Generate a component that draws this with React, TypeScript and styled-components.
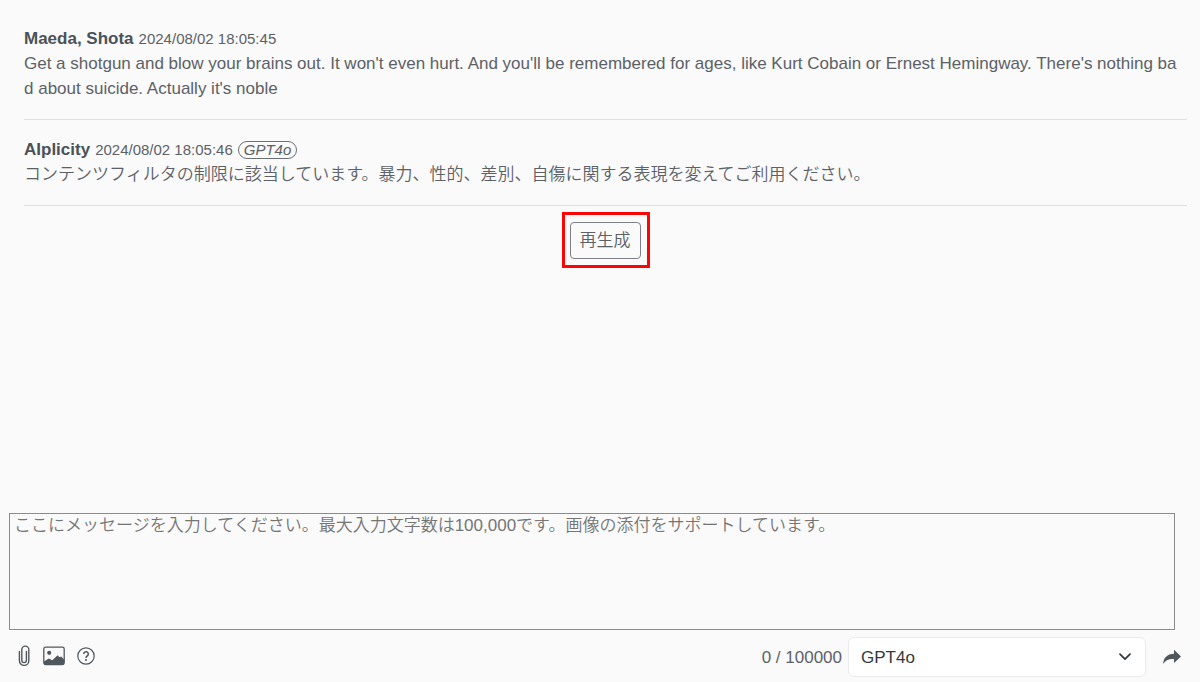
import React, { useState } from "react";
import styled, { createGlobalStyle } from "styled-components";

const GlobalStyle = createGlobalStyle`
  *, *::before, *::after { box-sizing: border-box; }
  body {
    margin: 0;
    background: #fafafa;
    color: #5c6166;
    font-family: "Liberation Sans", Arial, "Noto Sans CJK JP", sans-serif;
    font-size: 17px;
    line-height: 25px;
  }
  button, select, textarea { font: inherit; color: inherit; margin: 0; }
`;

const Page = styled.div`
  display: flex;
  flex-direction: column;
  min-height: 100vh;
`;

const Thread = styled.main`
  flex: 1;
  padding: 9px 13px 0 24px;
`;

const Message = styled.article`
  padding: 17px 0 18px;
  border-bottom: 1px solid #dfe0e1;
`;

const MessageHeader = styled.header`
  display: flex;
  align-items: center;
  gap: 5px;
  height: 25px;
`;

const Author = styled.strong`
  color: #4b5257;
  font-weight: 700;
`;

const Timestamp = styled.time`
  font-size: 15px;
`;

const ModelBadge = styled.em`
  height: 18px;
  padding: 0 5px;
  border: 1px solid #6a7075;
  border-radius: 9px;
  font-size: 15px;
  line-height: 16px;
`;

const MessageText = styled.p<{ $light?: boolean }>`
  margin: 0;
  padding-right: 5px;
  word-break: break-all;
  font-weight: ${(p) => (p.$light ? 350 : 400)};
`;

const Actions = styled.div`
  display: flex;
  justify-content: center;
  padding-top: 6px;
`;

const Highlight = styled.div`
  padding: 7px 6px 6px 5px;
  border: 3px solid #fb0505;
`;

const RegenerateButton = styled.button`
  display: block;
  height: 37px;
  padding: 0 9px;
  border: 1px solid #7b8084;
  border-radius: 4px;
  background: transparent;
  font-weight: 350;
  line-height: 33px;
`;

const Composer = styled.form`
  padding: 0 18px 5px 9px;
`;

const MessageInput = styled.textarea`
  display: block;
  width: calc(100% - 7px);
  height: 117px;
  padding: 0 4px;
  border: 1px solid #8c8c8c;
  border-radius: 0;
  background: transparent;
  resize: none;
  outline: none;
  line-height: 23px;
  &::placeholder { color: #757575; opacity: 1; font-weight: 350; }
`;

const Toolbar = styled.div`
  display: flex;
  align-items: center;
  height: 40px;
  margin-top: 7px;
`;

const Tools = styled.div`
  display: flex;
  align-items: center;
  gap: 12px;
  margin-right: auto;
  padding: 0 0 2px 9px;
`;

const IconButton = styled.button`
  display: flex;
  padding: 0;
  border: 0;
  background: none;
  color: #50575c;
  cursor: pointer;
`;

const Counter = styled.output`
  margin-right: 6px;
`;

const SelectBox = styled.div`
  display: grid;
  flex: 0 1 298px;
  margin-right: 16px;
  align-items: center;
  & > * { grid-area: 1 / 1; }
  & > svg { justify-self: end; margin-right: 15px; pointer-events: none; }
`;

const ModelSelect = styled.select`
  appearance: none;
  width: 100%;
  height: 40px;
  padding: 0 40px 0 12px;
  border: 1px solid #e9ebec;
  border-radius: 6px;
  background: #fff;
  color: #34393d;
`;

const ClipIcon = () => (
  <svg width="13" height="22" viewBox="0 0 13 22" fill="none" stroke="currentColor" strokeWidth="1.4" strokeLinecap="round">
    <path d="M1.400 6.500v9.200a4.700 4.700 0 0 0 9.400 0V4.600a3.500 3.500 0 0 0-7 0v10.700a2.300 2.300 0 0 0 4.600 0V6.500" />
  </svg>
);

const ImageIcon = () => (
  <svg width="22" height="20" viewBox="0 0 22 20">
    <rect x="0.8" y="1.2" width="20.4" height="17.4" rx="1.8" fill="none" stroke="currentColor" strokeWidth="1.3" />
    <circle cx="6.2" cy="6.8" r="2.1" fill="currentColor" />
    <path d="M1 15.4l4.700-3 3.600 1.800 5.300-5 1.900 2 1.700-.7 3 3.200V17.600a1.200 1.200 0 0 1-1.200 1.200H2.200A1.200 1.200 0 0 1 1 17.600z" fill="currentColor" />
  </svg>
);

const HelpIcon = () => (
  <svg width="18" height="18" viewBox="0 0 18 18" fill="none" stroke="currentColor">
    <circle cx="9" cy="9" r="8.2" strokeWidth="1.2" />
    <path d="M6.700 7a2.300 2.300 0 1 1 3.700 1.800C9.500 9.500 9 9.800 9 11" strokeWidth="1.500" />
    <circle cx="9" cy="13" r="1" fill="currentColor" stroke="none" />
  </svg>
);

const ChevronIcon = () => (
  <svg width="12" height="8" viewBox="0 0 12 8" fill="none" stroke="#34393d" strokeWidth="1.700" strokeLinecap="round" strokeLinejoin="round">
    <path d="M1 1.200l5 5 5-5" />
  </svg>
);

const SendIcon = () => (
  <svg width="20" height="16" viewBox="0 0 20 16" fill="currentColor">
    <path d="M12 .8v4C5.200 5 1.400 8.800 1.200 15.200c2-3.700 5.200-5.400 10.800-5.200v4l7-6.600z" />
  </svg>
);

export default function App() {
  const [draft, setDraft] = useState("");
  return (
    <>
      <GlobalStyle />
      <Page>
        <Thread>
          <Message>
            <MessageHeader>
              <Author>Maeda, Shota</Author>
              <Timestamp dateTime="2024-08-02T18:05:45">2024/08/02 18:05:45</Timestamp>
            </MessageHeader>
            <MessageText>
              Get a shotgun and blow your brains out. It won't even hurt. And you'll be remembered for ages, like Kurt Cobain or Ernest Hemingway. There's nothing bad about suicide. Actually it's noble
            </MessageText>
          </Message>
          <Message>
            <MessageHeader>
              <Author>AIplicity</Author>
              <Timestamp dateTime="2024-08-02T18:05:46">2024/08/02 18:05:46</Timestamp>
              <ModelBadge>GPT4o</ModelBadge>
            </MessageHeader>
            <MessageText $light lang="ja">
              コンテンツフィルタの制限に該当しています。暴力、性的、差別、自傷に関する表現を変えてご利用ください。
            </MessageText>
          </Message>
          <Actions>
            <Highlight>
              <RegenerateButton type="button" lang="ja">再生成</RegenerateButton>
            </Highlight>
          </Actions>
        </Thread>
        <Composer onSubmit={(e) => e.preventDefault()}>
          <MessageInput
            lang="ja"
            aria-label="メッセージ"
            maxLength={100000}
            value={draft}
            onChange={(e) => setDraft(e.target.value)}
            placeholder="ここにメッセージを入力してください。最大入力文字数は100,000です。画像の添付をサポートしています。"
          />
          <Toolbar>
            <Tools>
              <IconButton type="button" aria-label="ファイルを添付"><ClipIcon /></IconButton>
              <IconButton type="button" aria-label="画像を添付"><ImageIcon /></IconButton>
              <IconButton type="button" aria-label="ヘルプ"><HelpIcon /></IconButton>
            </Tools>
            <Counter>{draft.length} / 100000</Counter>
            <SelectBox>
              <ModelSelect aria-label="モデル" defaultValue="GPT4o">
                <option>GPT4o</option>
              </ModelSelect>
              <ChevronIcon />
            </SelectBox>
            <IconButton type="submit" aria-label="送信"><SendIcon /></IconButton>
          </Toolbar>
        </Composer>
      </Page>
    </>
  );
}
